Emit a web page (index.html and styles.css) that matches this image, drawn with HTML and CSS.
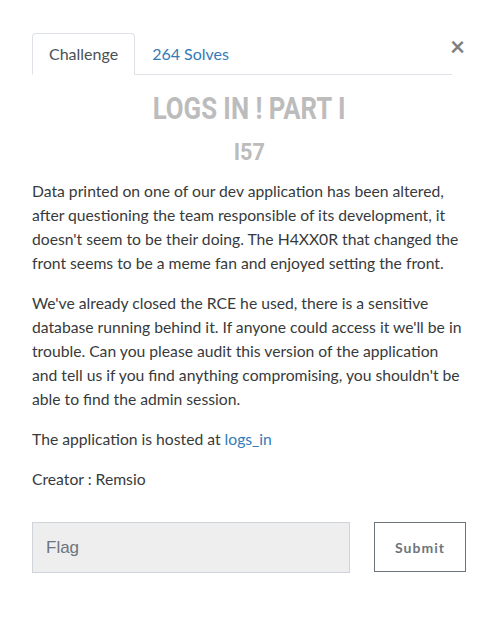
FILE: index.html
```
<!DOCTYPE html>
<html>
<head>
<meta charset="utf-8">
<link rel="stylesheet" href="styles.css">
</head>
<body>
<div class="modal">
  <div class="header">
    <ul class="tabs">
      <li class="tab active">Challenge</li>
      <li class="tab link">264 Solves</li>
    </ul>
    <button class="close">×</button>
  </div>
  <h2 class="title"><span class="squeeze">LOGS IN ! PART I</span></h2>
  <h3 class="points"><span class="squeeze">I57</span></h3>
  <div class="desc">
    <p>Data printed on one of our dev application has been altered, after questioning the team responsible of its development, it doesn't seem to be their doing. The H4XX0R that changed the front seems to be a meme fan and enjoyed setting the front.</p>
    <p>We've already closed the RCE he used, there is a sensitive database running behind it. If anyone could access it we'll be in trouble. Can you please audit this version of the application and tell us if you find anything compromising, you shouldn't be able to find the admin session.</p>
    <p>The application is hosted at <a class="lnk" href="#">logs_in</a></p>
    <p>Creator : Remsio</p>
  </div>
  <form class="submit-row">
    <input class="flag" type="text" placeholder="Flag">
    <button class="btn" type="button">Submit</button>
  </form>
</div>
</body>
</html>
```
FILE: styles.css
```
html, body {
  margin: 0;
  padding: 0;
  background: #fff;
}
body {
  font-family: Lato, "Open Sans", sans-serif;
  font-size: 15.7px;
  line-height: 24px;
  color: #373a3c;
}
.modal {
  width: 434px;
  padding: 33px 32px 0 32px;
}
.header {
  position: relative;
}
.tabs {
  list-style: none;
  margin: 0;
  padding: 0;
  display: flex;
  width: 420px;
  border-bottom: 1px solid #dee2e6;
  font-size: 16px;
}
.tab {
  padding: 8px 16px;
  margin-bottom: -1px;
  border: 1px solid transparent;
  border-top-left-radius: 4px;
  border-top-right-radius: 4px;
}
.tab.active {
  color: #495057;
  border-color: #dee2e6 #dee2e6 #fff;
  background: #fff;
}
.tab.link {
  color: #337ab7;
}
.close {
  position: absolute;
  right: 1px;
  top: 1px;
  background: none;
  border: 0;
  padding: 0;
  font-family: Lato, sans-serif;
  font-size: 26px;
  font-weight: 700;
  line-height: 24px;
  color: #000;
  opacity: 0.5;
}
.title, .points {
  text-align: center;
  font-family: Roboto, "DejaVu Sans", sans-serif;
  font-weight: 700;
  color: #bcbcbc;
}
.squeeze {
  display: inline-block;
}
.title .squeeze {
  transform: scaleX(0.83);
}
.points .squeeze {
  transform: scaleX(0.9);
}
.title {
  margin: 17px 0 0 0;
  font-size: 31px;
  line-height: 34px;
}
.points {
  margin: 13px 0 0 0;
  font-size: 24px;
  line-height: 26px;
}
.desc {
  margin-top: 14px;
}
.desc p {
  margin: 0 0 16px 0;
}
.lnk {
  color: #337ab7;
  text-decoration: none;
}
.submit-row {
  display: flex;
  justify-content: space-between;
  margin-top: 31px;
}
.flag {
  box-sizing: border-box;
  width: 318px;
  height: 51px;
  background: #eee;
  border: 1px solid #ced4da;
  padding: 0 13px;
  font-family: "Liberation Sans", Arial, sans-serif;
  font-size: 17px;
  color: #495057;
  outline: none;
}
.flag::placeholder {
  color: #6c757d;
}
.btn {
  box-sizing: border-box;
  width: 92px;
  height: 50px;
  background: #fff;
  border: 1px solid #6c757d;
  font-family: Lato, sans-serif;
  font-weight: 700;
  font-size: 14px;
  letter-spacing: 1px;
  color: #6c757d;
}
```
